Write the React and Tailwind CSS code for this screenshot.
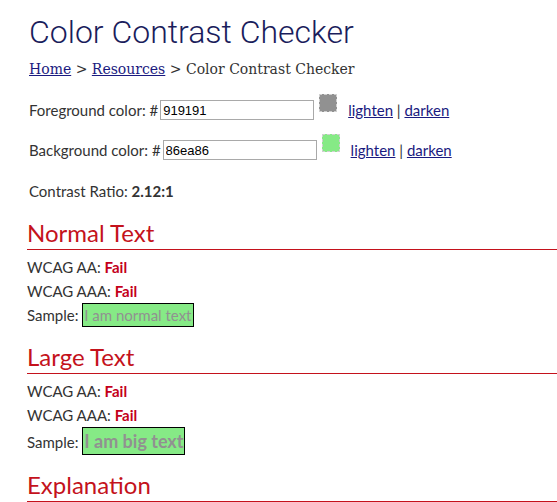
import React from "react";

const body = { fontFamily: "Lato, 'Open Sans', sans-serif" };

function Swatch({ color }) {
  return <span className="inline-block h-[18px] w-[18px] border border-dashed border-[#d0d0d0]" style={{ backgroundColor: color }} />;
}

function ColorRow({ label, value, color }) {
  return (
    <div className="flex items-center h-[20px]">
      <span>{label}: #</span>
      <input
        readOnly
        value={value}
        className="ml-[2px] h-[20px] w-[154px] border border-[#a9a9a9] px-[2px] text-[13px] text-black font-['Liberation_Sans',Arial,sans-serif] outline-none"
      />
      <span className="ml-[5px] -mt-[8px]"><Swatch color={color} /></span>
      <span className="ml-[11px]">
        <a href="#" className="text-[#1a1a80] underline">lighten</a> | <a href="#" className="text-[#1a1a80] underline">darken</a>
      </span>
    </div>
  );
}

function Section({ title, big }) {
  return (
    <div>
      <h2 className="text-[24px] leading-[30px] text-[#c4121c] border-b border-[#c4121c] pb-[1px]">{title}</h2>
      <div className="mt-[5px] leading-[24px]">
        <div>WCAG AA: <b className="text-[#c4001a]">Fail</b></div>
        <div>WCAG AAA: <b className="text-[#c4001a]">Fail</b></div>
        <div>
          Sample:{" "}
          <span
            className={
              "inline-block border border-black bg-[#86ea86] text-[#919191] px-[1px] " +
              (big ? "text-[18px] font-bold leading-[26px]" : "leading-[22px]")
            }
          >
            {big ? "I am big text" : "I am normal text"}
          </span>
        </div>
      </div>
    </div>
  );
}

export default function App() {
  return (
    <div className="min-h-screen bg-white overflow-hidden pl-[27px] text-[15px] text-[#333]" style={body}>
      <h1 className="pt-[12px] pl-[2px] text-[32px] leading-[40px] font-light text-[#1a1d5c] font-['Roboto',sans-serif]">
        Color Contrast Checker
      </h1>
      <div className="mt-[7px] pl-[2px] text-[14px] text-[#333] font-['DejaVu_Serif',serif]">
        <a href="#" className="text-[#1a1a80] underline">Home</a> &gt;{" "}
        <a href="#" className="text-[#1a1a80] underline">Resources</a> &gt; Color Contrast Checker
      </div>
      <div className="mt-[20px] pl-[2px] flex flex-col gap-[20px]">
        <ColorRow label="Foreground color" value="919191" color="#919191" />
        <ColorRow label="Background color" value="86ea86" color="#86ea86" />
        <div>Contrast Ratio: <b>2.12:1</b></div>
      </div>
      <div className="mt-[15px] flex flex-col gap-[15px]">
        <Section title="Normal Text" />
        <Section title="Large Text" big />
        <h2 className="text-[24px] leading-[30px] text-[#c4121c] border-b border-[#c4121c] pb-[1px]">Explanation</h2>
      </div>
    </div>
  );
}
